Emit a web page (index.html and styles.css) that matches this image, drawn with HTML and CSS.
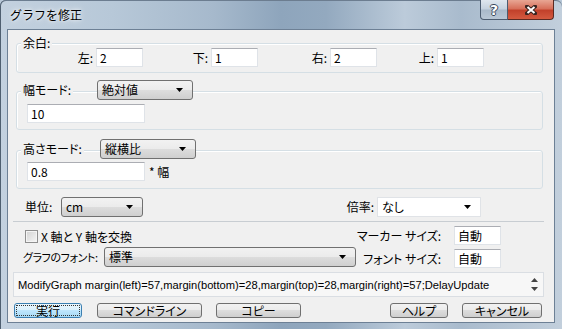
FILE: index.html
```html
<!DOCTYPE html>
<html lang="ja">
<head>
  <meta charset="UTF-8" />
  <title>グラフを修正</title>
  <link rel="stylesheet" href="styles.css">
</head>
<body>

<div class="window">
  <div class="titlebar">
    <span class="title">グラフを修正</span>
    <div class="caption">
      <span class="cap-btn cap-help">?</span>
      <span class="cap-btn cap-close">
        <svg width="12" height="10" viewBox="0 0 12 10">
          <path d="M2 1.5L10 8.5M10 1.5L2 8.5" stroke="#3a2420" stroke-width="4" stroke-linecap="square"/>
          <path d="M2.5 2L9.5 8M9.5 2L2.5 8" stroke="#fff" stroke-width="2"/>
        </svg>
      </span>
    </div>
  </div>

  <div class="client">
    <div class="group group-margin">
      <div class="group-head head-small"><span class="legend">余白:</span></div>
      <div class="margin-row">
        <label class="pair"><span>左:</span><input class="field short" value="2"></label>
        <label class="pair"><span>下:</span><input class="field short" value="1"></label>
        <label class="pair"><span>右:</span><input class="field short" value="2"></label>
        <label class="pair"><span>上:</span><input class="field short" value="1"></label>
      </div>
    </div>

    <div class="group group-width">
      <div class="group-head">
        <div class="legend-box lb-width"><span class="legend">幅モード:</span></div>
        <div class="combo combo-btn mode">絶対値<svg class="arrow" width="7" height="4"><path d="M0 0h7L3.5 4z"/></svg></div>
      </div>
      <div class="group-body"><input class="field wide" value="10"></div>
    </div>

    <div class="group group-height">
      <div class="group-head">
        <div class="legend-box lb-height"><span class="legend">高さモード:</span></div>
        <div class="combo combo-btn mode">縦横比<svg class="arrow" width="7" height="4"><path d="M0 0h7L3.5 4z"/></svg></div>
      </div>
      <div class="group-body"><input class="field wide" value="0.8"><span class="times">* 幅</span></div>
    </div>

    <div class="unit-row">
      <span class="unit-label">単位:</span>
      <div class="combo combo-btn unit">cm<svg class="arrow" width="7" height="4"><path d="M0 0h7L3.5 4z"/></svg></div>
      <span class="scale-label">倍率:</span>
      <div class="combo combo-edit scale">なし<svg class="arrow" width="7" height="4"><path d="M0 0h7L3.5 4z"/></svg></div>
    </div>

    <div class="separator"></div>

    <div class="opt-row opt-a">
      <label class="check"><span class="box"></span>X 軸と Y 軸を交換</label>
      <span class="rlabel">マーカー サイズ:</span>
      <input class="field auto" value="自動">
    </div>
    <div class="opt-row opt-b">
      <span class="flabel">グラフのフォント:</span>
      <div class="combo combo-btn font">標準<svg class="arrow" width="7" height="4"><path d="M0 0h7L3.5 4z"/></svg></div>
      <span class="rlabel">フォント サイズ:</span>
      <input class="field auto" value="自動">
    </div>

    <div class="cmdline">
      <span class="cmd-text">ModifyGraph margin(left)=57,margin(bottom)=28,margin(top)=28,margin(right)=57;DelayUpdate</span>
      <div class="spin">
        <svg width="7" height="4"><path d="M0 4h7L3.5 0z"/></svg>
        <svg width="7" height="4"><path d="M0 0h7L3.5 4z"/></svg>
      </div>
    </div>

    <div class="button-row">
      <button class="btn default b-run">実行</button>
      <button class="btn b-cmd">コマンドライン</button>
      <button class="btn b-copy">コピー</button>
      <button class="btn b-help">ヘルプ</button>
      <button class="btn b-cancel">キャンセル</button>
    </div>
  </div>
</div>

</body>
</html>
```

FILE: styles.css
```css
* { box-sizing: border-box; }
body {
  margin: 0;
  background: #b8c8d8;
  font-family: "Noto Sans CJK JP", sans-serif;
  font-size: 12px;
  line-height: 14px;
  font-feature-settings: "palt";
  color: #000;
}
.window {
  width: 562px;
  height: 329px;
  background: linear-gradient(to right, #c3d1df 0%, #b7c8d8 20%, #a6b9cc 38%, #8ea5bc 50%, #93a9bf 58%, #bccbda 72%, #a9bbcd 82%, #c2cfdc 100%);
  box-shadow: inset 1px 0 0 #4f5f70, inset 0 1px 0 #6c7d90;
  border-radius: 6px 6px 0 0;
  overflow: hidden;
}
.titlebar {
  height: 29px;
  display: flex;
  align-items: flex-start;
}
.title {
  padding: 8px 0 0 10px;
  line-height: 14px;
  font-size: 12px;
  font-feature-settings: normal;
  text-shadow: 0 0 6px #fff, 0 0 3px rgba(255,255,255,0.8);
}
.caption {
  margin-left: auto;
  margin-right: 8px;
  display: flex;
}
.cap-btn {
  height: 20px;
  display: flex;
  align-items: center;
  justify-content: center;
  border: 1px solid #4c5c70;
  border-top: none;
}
.cap-help {
  width: 28px;
  border-radius: 0 0 0 4px;
  background: linear-gradient(#dfe6ee 0%, #c5d1de 48%, #a9b9ca 52%, #b9c7d6 100%);
  color: #fff;
  font: bold 14px "DejaVu Sans", sans-serif;
  text-shadow: 1px 0 0 #39475a, -1px 0 0 #39475a, 0 1px 0 #39475a, 0 -1px 0 #39475a;
}
.cap-close {
  width: 46px;
  border-left: none;
  border-color: #5b2a22;
  border-radius: 0 0 4px 0;
  background: linear-gradient(#e8a694 0%, #d7705b 45%, #c2412b 55%, #d45a40 100%);
}

.client {
  margin-left: 7px;
  width: 548px;
  height: 294px;
  border: 1px solid #6d8095;
  background: #f0f0f0;
}

/* group boxes */
.group {
  margin-left: 8px;
  width: 527px;
  border: 1px solid #d5dfe5;
  border-radius: 3px;
  box-shadow: inset 1px 1px 0 #fff;
}
.group-margin { margin-top: 13px; padding-bottom: 5px; }
.group-width { margin-top: 18px; padding-bottom: 6px; }
.group-height { margin-top: 20px; padding-bottom: 7px; }
.group-head {
  height: 20px;
  margin-top: -12px;
  padding-left: 4px;
  display: flex;
  align-items: center;
}
.head-small { height: 14px; margin-top: -8px; }
.legend {
  background: #f0f0f0;
  padding: 0 2px;
  line-height: 14px;
}
.lb-width { width: 76px; }
.lb-height { width: 79px; }
.margin-row {
  margin-top: -2px;
  padding-left: 33px;
  display: grid;
  grid-template-columns: 93px 115px 119px 107px;
}
.pair {
  display: flex;
  justify-content: flex-end;
  align-items: center;
  gap: 3px;
}
.group-body {
  padding-left: 10px;
  display: flex;
  align-items: center;
}
.group-width .group-body { margin-top: 4px; }
.group-height .group-body { margin-top: 3px; }
.times { margin-left: 4px; }

/* controls */
.field {
  display: block;
  height: 19px;
  padding: 0 3px;
  border: 1px solid #dfe3e8;
  border-top-color: #abadb3;
  background: #fff;
  font: inherit;
  line-height: 17px;
  color: #000;
}
.short { width: 47px; }
.wide { width: 118px; }
.auto { width: 47px; }
.combo {
  height: 20px;
  padding: 0 9px 0 4px;
  display: flex;
  align-items: center;
  justify-content: space-between;
  border-radius: 3px;
}
.combo-btn {
  border: 1px solid #707070;
  background: linear-gradient(#f2f2f2 0%, #ebebeb 50%, #dddddd 50%, #cfcfcf 100%);
}
.combo-edit {
  border: 1px solid #e0e3e7;
  background: #fff;
  border-radius: 0;
}
.mode { width: 96px; }
.unit { width: 82px; }
.scale { width: 104px; }
.font { width: 252px; }

.unit-row {
  height: 20px;
  margin-top: 8px;
  padding: 0 73px 0 17px;
  display: flex;
  align-items: center;
}
.unit-label { width: 36px; }
.scale-label { margin-left: auto; margin-right: 3px; }

.separator {
  margin: 4px 0 0 5px;
  width: 531px;
  height: 1px;
  background: #c8cdd2;
}

.opt-row {
  padding: 0 53px 0 15px;
  display: flex;
  align-items: flex-start;
  white-space: nowrap;
}
.opt-a { height: 19px; margin-top: 4px; }
.opt-b { height: 21px; margin-top: 2px; }
.check {
  margin: 4px 0 0 2px;
  display: flex;
  align-items: center;
  line-height: 13px;
}
.box {
  width: 13px;
  height: 13px;
  margin-right: 3px;
  border: 1px solid #8f8f8f;
  background: linear-gradient(135deg, #d2d2d2, #f6f6f6);
  box-shadow: inset 0 0 0 1px #f4f4f4;
}
.flabel {
  width: 81px;
  font-size: 11px;
  line-height: 20px;
  letter-spacing: -0.4px;
}
.rlabel {
  margin-left: auto;
  margin-right: 13px;
  line-height: 19px;
}
.opt-b .rlabel { margin-top: 2px; }
.opt-b .field { margin-top: 2px; }

.cmdline {
  margin: 4px 0 0 5px;
  width: 531px;
  height: 25px;
  padding: 0 5px 0 4px;
  border: 1px solid #dadee3;
  background: #f7f7f7;
  display: flex;
  align-items: center;
}
.cmd-text {
  flex: 1;
  white-space: nowrap;
  overflow: hidden;
  font-family: "Liberation Sans", sans-serif;
  font-size: 11.15px;
}
.spin {
  display: flex;
  flex-direction: column;
  gap: 5px;
  fill: #444;
}

.button-row {
  margin-top: 6px;
  padding: 0 12px 0 6px;
  display: flex;
  gap: 15px;
}
.btn {
  height: 15px;
  padding: 0;
  font: inherit;
  line-height: 13px;
  color: #000;
  border: 1px solid #707070;
  border-radius: 3px;
  background: linear-gradient(#f2f2f2 0%, #ebebeb 50%, #dddddd 50%, #cfcfcf 100%);
}
.default {
  border-color: #3c7fb1;
  background: linear-gradient(#eaf6fd 0%, #d9f0fc 50%, #bee6fd 50%, #a7d9f5 100%);
  outline: 1px dotted #333;
  outline-offset: -3px;
}
.b-run { width: 68px; }
.b-cmd { width: 105px; }
.b-copy { width: 85px; margin-left: -1px; }
.b-help { width: 58px; margin-left: auto; }
.b-cancel { width: 80px; margin-left: -1px; }
```
